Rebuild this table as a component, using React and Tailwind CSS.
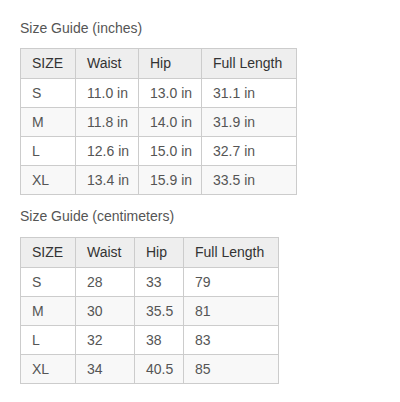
import React from "react";

const inches = [
  ["S", "11.0 in", "13.0 in", "31.1 in"],
  ["M", "11.8 in", "14.0 in", "31.9 in"],
  ["L", "12.6 in", "15.0 in", "32.7 in"],
  ["XL", "13.4 in", "15.9 in", "33.5 in"],
];

const cms = [
  ["S", "28", "33", "79"],
  ["M", "30", "35.5", "81"],
  ["L", "32", "38", "83"],
  ["XL", "34", "40.5", "85"],
];

function SizeTable({ rows, widths }) {
  const heads = ["SIZE", "Waist", "Hip", "Full Length"];
  const total = widths.reduce((a, b) => a + b, 0) + 1;
  return (
    <table
      style={{ width: total }}
      className="table-fixed border-collapse whitespace-nowrap text-[14px] text-[#555]"
    >
      <colgroup>
        {widths.map((w, i) => (
          <col key={i} style={{ width: w }} />
        ))}
      </colgroup>
      <thead>
        <tr className="bg-[#eee]">
          {heads.map((h) => (
            <th
              key={h}
              className="h-[30px] border border-[#ccc] pl-[11px] pr-0 text-left font-normal text-[#333]"
            >
              {h}
            </th>
          ))}
        </tr>
      </thead>
      <tbody>
        {rows.map((r, ri) => (
          <tr key={r[0]} className={ri % 2 === 1 ? "bg-[#f8f8f8]" : "bg-white"}>
            {r.map((c, ci) => (
              <td key={ci} className="h-[29px] border border-[#ccc] pl-[11px] pr-0">
                {c}
              </td>
            ))}
          </tr>
        ))}
      </tbody>
    </table>
  );
}

export default function App() {
  return (
    <div
      className="min-h-[402px] bg-white pl-5 pt-[18px]"
      style={{ fontFamily: '"Liberation Sans", Arial, sans-serif' }}
    >
      <h2 className="h-5 text-[14px] leading-5 text-[#555]">Size Guide (inches)</h2>
      <div className="mt-[10px]">
        <SizeTable rows={inches} widths={[55, 63, 63, 95]} />
      </div>
      <h2 className="mt-[11px] h-5 text-[14px] leading-5 text-[#555]">Size Guide (centimeters)</h2>
      <div className="mt-[11px]">
        <SizeTable rows={cms} widths={[55, 59, 49, 95]} />
      </div>
    </div>
  );
}
